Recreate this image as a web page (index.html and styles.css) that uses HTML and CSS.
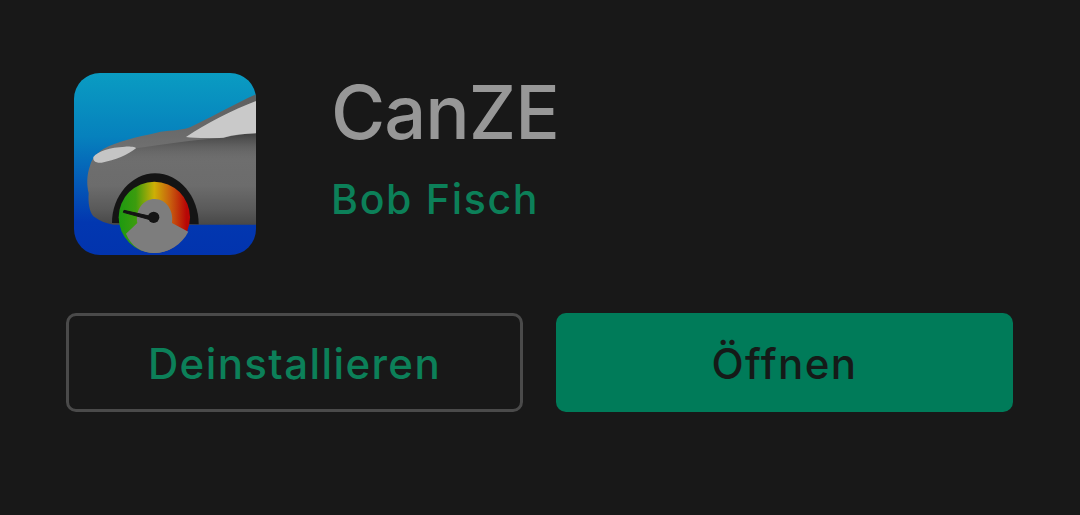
FILE: index.html
```html
<!DOCTYPE html>
<html lang="de">
<head>
<meta charset="utf-8">
<title>CanZE</title>
<link rel="stylesheet" href="styles.css">
</head>
<body>
<main class="page">
  <section class="header">
    <svg class="app-icon" viewBox="42 40 546 546" aria-hidden="true">
      <defs>
        <linearGradient id="sky" x1="0" y1="0" x2="0" y2="1">
          <stop offset="0" stop-color="#0a9cc2"/>
          <stop offset="0.35" stop-color="#0681bd"/>
          <stop offset="0.62" stop-color="#0457b6"/>
          <stop offset="0.82" stop-color="#0237b0"/>
          <stop offset="1" stop-color="#0234ae"/>
        </linearGradient>
        <linearGradient id="body" x1="0" y1="0" x2="0" y2="1">
          <stop offset="0" stop-color="#5e5e5e"/>
          <stop offset="0.4" stop-color="#6f6f6f"/>
          <stop offset="0.7" stop-color="#6c6c6c"/>
          <stop offset="0.88" stop-color="#5a5a5a"/>
          <stop offset="1" stop-color="#484848"/>
        </linearGradient>
        <linearGradient id="crease" x1="0" y1="0" x2="0" y2="1">
          <stop offset="0" stop-color="#404040"/>
          <stop offset="1" stop-color="#6e6e6e" stop-opacity="0"/>
        </linearGradient>
        <linearGradient id="gauge" x1="0" y1="0" x2="1" y2="0">
          <stop offset="0" stop-color="#1c9a10"/>
          <stop offset="0.24" stop-color="#3c9c0e"/>
          <stop offset="0.5" stop-color="#cdb006"/>
          <stop offset="0.72" stop-color="#c8600e"/>
          <stop offset="0.95" stop-color="#b80606"/>
        </linearGradient>
        <clipPath id="rounded"><rect x="42" y="40" width="546" height="546" rx="78"/></clipPath>
      </defs>
      <g clip-path="url(#rounded)">
        <rect x="42" y="40" width="546" height="546" fill="url(#sky)"/>
        <path d="M588 104 C520 135 440 180 390 203 C360 214 320 212 290 219 C230 232 170 245 130 268 C105 285 95 300 90 318 C80 345 80 375 86 400 C84 430 88 455 100 470 C120 485 140 492 160 495 L588 495 Z" fill="url(#body)"/>
        <path d="M228 266 C300 255 400 240 490 234 C530 226 560 222 588 221 L588 300 L120 310 C165 302 205 285 228 266 Z" fill="url(#crease)"/>
        <path d="M588 124 C520 150 440 190 378 232 C400 235 440 236 490 234 C520 226 555 222 588 221 Z" fill="#c9c9c9"/>
        <path d="M100 292 C112 275 150 263 195 261 C215 260 228 263 228 266 C205 285 165 302 125 309 C108 311 98 304 100 292 Z" fill="#c5c5c5"/>
        <path d="M156 490 C155 410 215 341 285 341 C358 341 416 410 416 494 Z" fill="#141414"/>
        <circle cx="283" cy="473" r="107" fill="url(#gauge)"/>
        <path d="M198 522 L232 490 C225 450 250 418 284 418 C320 418 342 455 336 490 L385 516 C365 555 325 580 283 580 C245 580 212 558 198 522 Z" fill="#7d7d7d"/>
        <path d="M192 452 L272 470 L270 480 L190 458 Z" fill="#141414" stroke="#141414" stroke-width="3" stroke-linejoin="round"/>
        <circle cx="281" cy="473" r="17" fill="#141414"/>
      </g>
    </svg>
    <div class="meta">
      <h1 class="title">CanZE</h1>
      <p class="developer">Bob Fisch</p>
    </div>
  </section>
  <section class="actions">
    <button class="btn btn-outline" type="button">Deinstallieren</button>
    <button class="btn btn-solid" type="button">Öffnen</button>
  </section>
</main>
</body>
</html>
```
FILE: styles.css
```css
html, body {
  margin: 0;
  height: 100%;
  background: #181818;
}
body {
  overflow: hidden;
  font-family: "Inter", "Liberation Sans", sans-serif;
}
.page {
  display: flex;
  flex-direction: column;
  padding: 73px 67px 0 66px;
}
.header {
  display: flex;
  align-items: flex-start;
  padding-left: 8px;
  gap: 75px;
}
.app-icon {
  display: block;
  width: 182px;
  height: 182px;
  flex: none;
}
.meta {
  display: flex;
  flex-direction: column;
}
.title {
  margin: 0;
  font-size: 74px;
  line-height: 78px;
  font-weight: 500;
  letter-spacing: -1px;
  color: #979797;
}
.developer {
  margin: 0;
  padding-top: 24px;
  font-size: 41px;
  line-height: 48px;
  font-weight: 500;
  letter-spacing: 1.7px;
  color: #0c8059;
}
.actions {
  display: grid;
  grid-template-columns: 1fr 1fr;
  gap: 33px;
  margin-top: 58px;
}
.btn {
  height: 99px;
  border-radius: 10px;
  font: 500 42px/1 "Inter", "Liberation Sans", sans-serif;
  letter-spacing: 1.4px;
  padding: 3px 0 0;
}
.btn-outline {
  background: transparent;
  border: 3px solid #4a4a4a;
  color: #0c8059;
}
.btn-solid {
  background: #007b59;
  border: 0;
  color: #151a18;
}
```
